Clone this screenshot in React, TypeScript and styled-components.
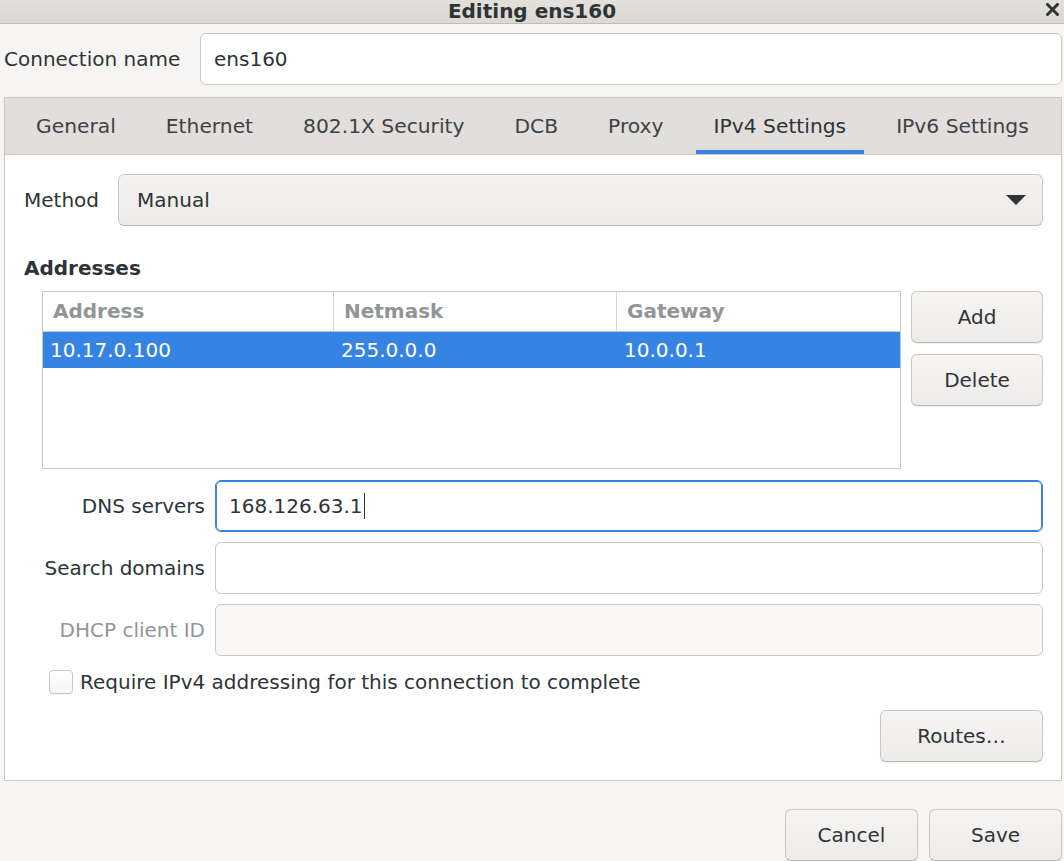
import React from "react";
import styled, { createGlobalStyle, css } from "styled-components";

const Global = createGlobalStyle`
  html, body { margin: 0; padding: 0; background: #f6f5f4; }
  body { font-family: "DejaVu Sans", "Noto Sans", sans-serif; color: #2e3436; }
  * { box-sizing: border-box; }
`;

const Window = styled.div`
  width: 1064px;
  height: 861px;
  overflow: hidden;
  display: flex;
  flex-direction: column;
  background: #f6f5f4;
`;

const TitleBar = styled.div`
  position: relative;
  height: 24px;
  flex: none;
  display: flex;
  align-items: flex-start;
  justify-content: center;
  background: linear-gradient(#e3e0dc, #dcd8d4);
  border-bottom: 1px solid #c3bcb5;
`;

const Title = styled.div`
  font-size: 20px;
  line-height: 20px;
  font-weight: bold;
  color: #2e3436;
  margin-top: 1px;
`;

const CloseButton = styled.div`
  position: absolute;
  right: 5px;
  top: 3px;
  width: 13px;
  height: 13px;
  display: flex;
`;

const NameRow = styled.div`
  display: flex;
  align-items: center;
  padding: 9px 2px 0 4px;
`;

const NameLabel = styled.div`
  font-size: 20px;
  width: 196px;
  flex: none;
`;

const Entry = styled.div<{ $focused?: boolean; $disabled?: boolean }>`
  flex: 1;
  height: 52px;
  display: flex;
  align-items: center;
  padding: 0 13px;
  font-size: 20px;
  color: #2e3436;
  border-radius: 6px;
  border: 1px solid #cdc7c2;
  background: ${(p) => (p.$disabled ? "#f8f7f6" : "#ffffff")};
  ${(p) =>
    p.$focused &&
    css`
      border-color: #3584e4;
      box-shadow: inset 0 0 0 1px #3584e4;
    `}
`;

const Caret = styled.span`
  display: inline-block;
  width: 1px;
  height: 26px;
  background: #2e3436;
  margin-left: 1px;
`;

const Notebook = styled.div`
  margin: 12px 2px 0 4px;
  height: 685px;
  border: 1px solid #cdc7c2;
  display: flex;
  flex-direction: column;
  background: #ffffff;
`;

const TabStrip = styled.div`
  height: 57px;
  flex: none;
  display: flex;
  align-items: stretch;
  padding-left: 6px;
  background: #e1dedb;
  border-bottom: 1px solid #cdc7c2;
`;

const Tab = styled.div<{ $active?: boolean }>`
  display: flex;
  align-items: center;
  padding: 0 18px;
  margin: 0 7px;
  font-size: 20.25px;
  color: ${(p) => (p.$active ? "#2e3436" : "#3d4244")};
  box-shadow: ${(p) => (p.$active ? "inset 0 -4px 0 #3584e4" : "none")};
`;

const Page = styled.div`
  flex: 1;
  display: flex;
  flex-direction: column;
  padding: 19px 18px 0 19px;
`;

const MethodRow = styled.div`
  display: flex;
  align-items: center;
  gap: 19px;
`;

const Label = styled.div<{ $dim?: boolean }>`
  font-size: 20px;
  color: ${(p) => (p.$dim ? "#929595" : "#2e3436")};
`;

const Combo = styled.div`
  flex: 1;
  height: 52px;
  display: flex;
  align-items: center;
  justify-content: space-between;
  padding: 0 16px 0 18px;
  font-size: 20px;
  border: 1px solid #cdc7c2;
  border-bottom-color: #bfb8b1;
  border-radius: 6px;
  background: linear-gradient(#f4f3f2, #edebe9);
`;

const Section = styled.div`
  font-size: 20px;
  font-weight: bold;
  margin-top: 30px;
`;

const AddrRow = styled.div`
  display: flex;
  gap: 10px;
  margin: 11px 0 0 18px;
`;

const Table = styled.div`
  width: 860px;
  height: 178px;
  border: 1px solid #cdc7c2;
  background: #ffffff;
`;

const Grid = styled.div<{ $head?: boolean }>`
  display: grid;
  grid-template-columns: 291px 283px 1fr;
  height: ${(p) => (p.$head ? "40px" : "36px")};
  ${(p) =>
    p.$head
      ? css`
          border-bottom: 1px solid #cdc7c2;
        `
      : css`
          background: #3584e4;
          color: #ffffff;
        `}
`;

const HeadCell = styled.div<{ $last?: boolean }>`
  display: flex;
  align-items: center;
  padding-left: 10px;
  padding-bottom: 2px;
  font-size: 20px;
  font-weight: bold;
  color: #929595;
  border-right: ${(p) => (p.$last ? "none" : "1px solid #d8d4d0")};
`;

const Cell = styled.div`
  display: flex;
  align-items: center;
  padding-left: 7px;
  font-size: 20px;
`;

const SideButtons = styled.div`
  display: flex;
  flex-direction: column;
  gap: 11px;
`;

const Button = styled.div<{ $w: number }>`
  width: ${(p) => p.$w}px;
  height: 52px;
  display: flex;
  align-items: center;
  justify-content: center;
  font-size: 20px;
  color: #2e3436;
  border: 1px solid #cdc7c2;
  border-bottom-color: #bfb8b1;
  border-radius: 6px;
  background: linear-gradient(#f6f5f4, #edebe9);
  box-shadow: 0 1px 1px rgba(0, 0, 0, 0.07);
`;

const Form = styled.div`
  display: grid;
  grid-template-columns: 181px 1fr;
  column-gap: 10px;
  row-gap: 10px;
  align-items: center;
  margin-top: 11px;
`;

const FormLabel = styled(Label)`
  text-align: right;
`;

const CheckRow = styled.div`
  display: flex;
  align-items: center;
  gap: 7px;
  margin: 14px 0 0 25px;
`;

const CheckBox = styled.div`
  width: 24px;
  height: 24px;
  border: 1px solid #cdc7c2;
  border-radius: 4px;
  background: linear-gradient(#ffffff, #f6f5f4);
  box-shadow: 0 1px 1px rgba(0, 0, 0, 0.05);
`;

const RoutesRow = styled.div`
  display: flex;
  justify-content: flex-end;
  margin-top: 16px;
`;

const Footer = styled.div`
  display: flex;
  justify-content: flex-end;
  gap: 11px;
  padding: 28px 2px 0 0;
`;

export default function App() {
  return (
    <Window>
      <Global />
      <TitleBar>
        <Title>Editing ens160</Title>
        <CloseButton>
          <svg width="13" height="13" viewBox="0 0 13 13">
            <path d="M1.5 1.5 L11.5 11.5 M11.5 1.5 L1.5 11.5" stroke="#2e3436" strokeWidth="3" strokeLinecap="square" />
          </svg>
        </CloseButton>
      </TitleBar>

      <NameRow>
        <NameLabel>Connection name</NameLabel>
        <Entry>ens160</Entry>
      </NameRow>

      <Notebook>
        <TabStrip>
          <Tab>General</Tab>
          <Tab>Ethernet</Tab>
          <Tab>802.1X Security</Tab>
          <Tab>DCB</Tab>
          <Tab>Proxy</Tab>
          <Tab $active>IPv4 Settings</Tab>
          <Tab>IPv6 Settings</Tab>
        </TabStrip>

        <Page>
          <MethodRow>
            <Label>Method</Label>
            <Combo>
              <span>Manual</span>
              <svg width="20" height="10" viewBox="0 0 20 10">
                <path d="M0 0 H20 L10 10 Z" fill="#2e3436" />
              </svg>
            </Combo>
          </MethodRow>

          <Section>Addresses</Section>
          <AddrRow>
            <Table>
              <Grid $head>
                <HeadCell>Address</HeadCell>
                <HeadCell>Netmask</HeadCell>
                <HeadCell $last>Gateway</HeadCell>
              </Grid>
              <Grid>
                <Cell>10.17.0.100</Cell>
                <Cell>255.0.0.0</Cell>
                <Cell>10.0.0.1</Cell>
              </Grid>
            </Table>
            <SideButtons>
              <Button $w={132}>Add</Button>
              <Button $w={132}>Delete</Button>
            </SideButtons>
          </AddrRow>

          <Form>
            <FormLabel>DNS servers</FormLabel>
            <Entry $focused>
              168.126.63.1
              <Caret />
            </Entry>
            <FormLabel>Search domains</FormLabel>
            <Entry />
            <FormLabel $dim>DHCP client ID</FormLabel>
            <Entry $disabled />
          </Form>

          <CheckRow>
            <CheckBox />
            <Label>Require IPv4 addressing for this connection to complete</Label>
          </CheckRow>

          <RoutesRow>
            <Button $w={163}>Routes…</Button>
          </RoutesRow>
        </Page>
      </Notebook>

      <Footer>
        <Button $w={133}>Cancel</Button>
        <Button $w={133}>Save</Button>
      </Footer>
    </Window>
  );
}
